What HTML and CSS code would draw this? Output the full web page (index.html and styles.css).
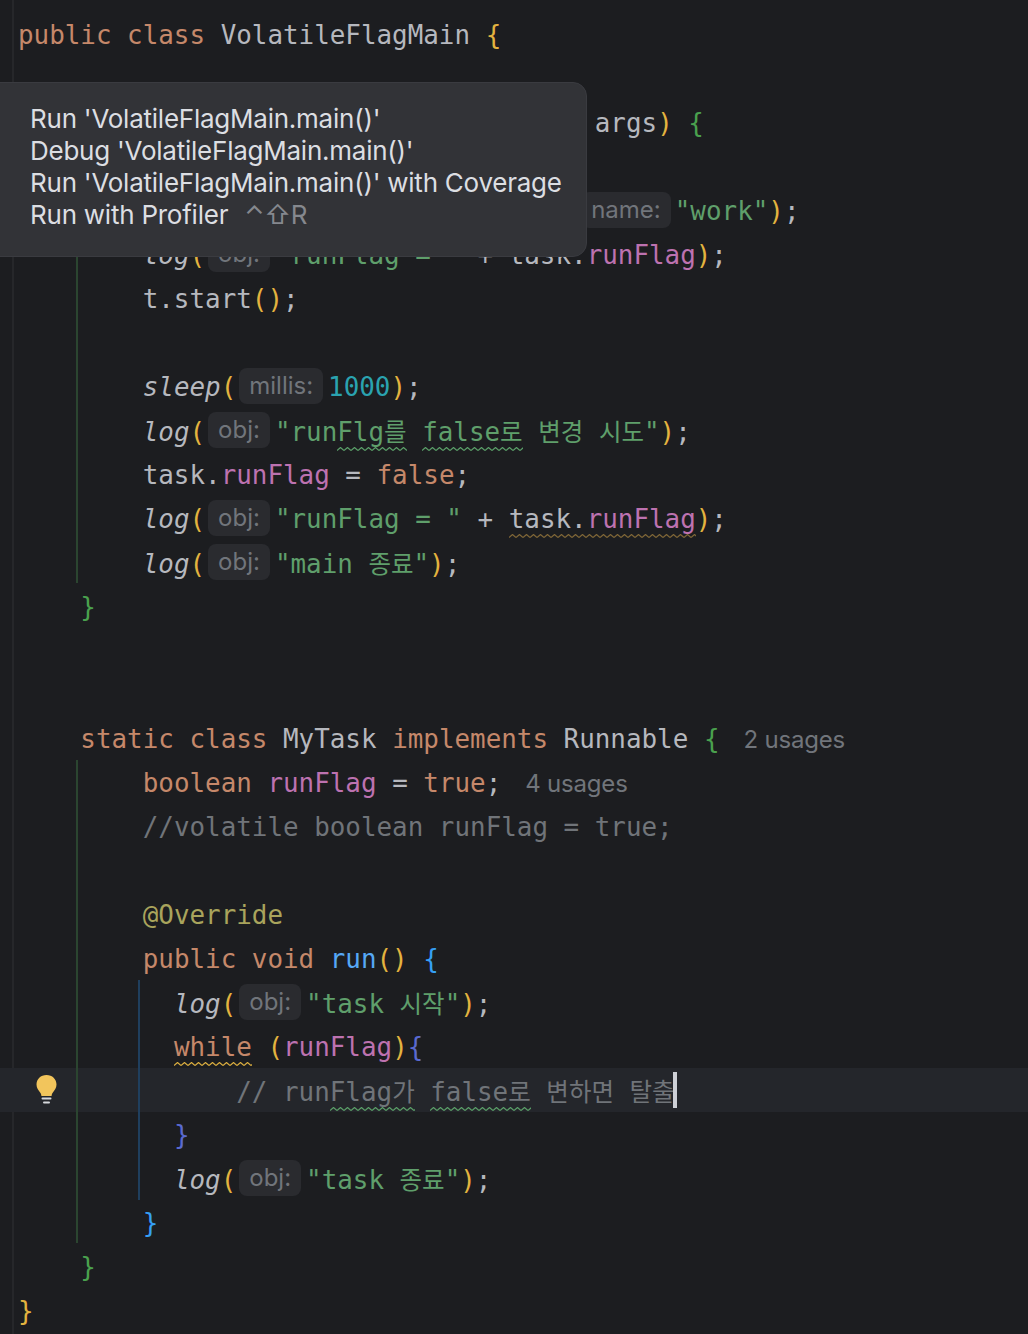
FILE: index.html
```html
<!DOCTYPE html>
<html lang="en">
<head>
<meta charset="utf-8">
<title>VolatileFlagMain</title>
<link rel="stylesheet" href="styles.css">
</head>
<body>
<main class="editor">
<div class="guide guide-green g-main"></div>
<div class="guide guide-green g-task"></div>
<div class="guide guide-blue g-run"></div>
<div class="rule"></div>
<svg class="bulb" viewBox="0 0 21 29" aria-hidden="true"><path d="M10.5 0C4.7 0 .5 4.2.5 9.6c0 3.7 2 5.8 3.6 8 .9 1.2 1.2 2.1 1.3 3.4h10.2c.1-1.3.4-2.2 1.3-3.4 1.6-2.2 3.6-4.3 3.6-8C20.500 4.200 16.300 0 10.500 0z" fill="#f2c55c"/><rect x="5.500" y="22.500" width="10" height="2" rx="1" fill="#d5d7dc"/><rect x="7" y="26.500" width="7" height="2" rx="1" fill="#d5d7dc"/></svg>
<div class="line"><span class="kw">public class</span> VolatileFlagMain <span class="by">{</span></div>
<div class="line"></div>
<div class="line">    <span class="kw">public static void</span> <span class="fn">main</span><span class="by">(</span>String[] args<span class="by">)</span> <span class="bg">{</span></div>
<div class="line">        MyTask task = <span class="kw">new</span> MyTask<span class="by">()</span>;</div>
<div class="line">        Thread t = <span class="kw">new</span> Thread<span class="by">(</span>task, <span class="chip chip-name">name:</span><span class="str">"work"</span><span class="by">)</span>;</div>
<div class="line">        <i>log</i><span class="by">(</span><span class="chip">obj:</span><span class="str">"runFlag = "</span> + task.<span class="fld">runFlag</span><span class="by">)</span>;</div>
<div class="line">        t.start<span class="by">()</span>;</div>
<div class="line"></div>
<div class="line">        <i>sleep</i><span class="by">(</span><span class="chip">millis:</span><span class="num">1000</span><span class="by">)</span>;</div>
<div class="line">        <i>log</i><span class="by">(</span><span class="chip">obj:</span><span class="str">"run<span class="typo">Flg<span class="ko">를</span></span> <span class="typo">false<span class="ko">로</span></span> <span class="ko">변경</span> <span class="ko">시도</span>"</span><span class="by">)</span>;</div>
<div class="line">        task.<span class="fld">runFlag</span> = <span class="kw">false</span>;</div>
<div class="line">        <i>log</i><span class="by">(</span><span class="chip">obj:</span><span class="str">"runFlag = "</span> + <span class="warn">task.<span class="fld">runFlag</span></span><span class="by">)</span>;</div>
<div class="line">        <i>log</i><span class="by">(</span><span class="chip">obj:</span><span class="str">"main <span class="ko">종료</span>"</span><span class="by">)</span>;</div>
<div class="line">    <span class="bg">}</span></div>
<div class="line"></div>
<div class="line"></div>
<div class="line">    <span class="kw">static class</span> MyTask <span class="kw">implements</span> Runnable <span class="bg">{</span><span class="usages">2 usages</span></div>
<div class="line">        <span class="kw">boolean</span> <span class="fld">runFlag</span> = <span class="kw">true</span>;<span class="usages">4 usages</span></div>
<div class="line">        <span class="cm">//volatile boolean runFlag = true;</span></div>
<div class="line"></div>
<div class="line">        <span class="ann">@Override</span></div>
<div class="line">        <span class="kw">public void</span> <span class="fn">run</span><span class="by">()</span> <span class="bb">{</span></div>
<div class="line">          <i>log</i><span class="by">(</span><span class="chip">obj:</span><span class="str">"task <span class="ko">시작</span>"</span><span class="by">)</span>;</div>
<div class="line">          <span class="kw warn-y">while</span> <span class="by">(</span><span class="fld">runFlag</span><span class="by">)</span><span class="bi">{</span></div>
<div class="line line-current">              <span class="cm">// run<span class="typo">Flag<span class="ko">가</span></span> <span class="typo">false<span class="ko">로</span></span> <span class="ko">변하면</span> <span class="ko">탈출</span></span><span class="caret"></span></div>
<div class="line">          <span class="bi">}</span></div>
<div class="line">          <i>log</i><span class="by">(</span><span class="chip">obj:</span><span class="str">"task <span class="ko">종료</span>"</span><span class="by">)</span>;</div>
<div class="line">        <span class="bb">}</span></div>
<div class="line">    <span class="bg">}</span></div>
<div class="line"><span class="by">}</span></div>
<div class="popup">
<div>Run 'VolatileFlagMain.main()'</div>
<div>Debug 'VolatileFlagMain.main()'</div>
<div>Run 'VolatileFlagMain.main()' with Coverage</div>
<div>Run with Profiler<span class="shortcut">⌃⇧R</span></div>
</div>
</main>
</body>
</html>
```
FILE: styles.css
```css
html, body {
  margin: 0;
  padding: 0;
  height: 100%;
  background: #1c1d20;
  overflow: hidden;
}
.editor {
  position: relative;
  height: 1334px;
  padding-top: 12px;
  box-sizing: border-box;
  overflow: hidden;
  font-family: "DejaVu Sans Mono", "Noto Sans CJK KR", monospace;
  font-size: 25.9px;
  color: #b6b8be;
}
.line {
  position: relative;
  height: 44px;
  line-height: 46px;
  padding-left: 18px;
  white-space: pre;
}
.line-current {
  background: #24262b;
}
.kw { color: #c5886a; }
.fn { color: #56a8f5; }
.fld { color: #bd72b0; }
.str { color: #5f9f6b; }
.num { color: #2aa3b0; }
.cm { color: #707479; }
.ann { color: #a9a45c; }
.by { color: #e3b33f; }
.bg { color: #4aa14e; }
.bb { color: #359ff4; }
.bi { color: #5a6ad0; }
i { font-style: italic; }
.ko {
  font-family: "Noto Sans CJK KR", sans-serif;
  font-size: 24.5px;
}
.typo, .warn, .warn-y {
  padding-bottom: 4px;
  background-repeat: repeat-x;
  background-position: 0 100%;
  background-size: 7px 4px;
}
.typo {
  background-image: url("data:image/svg+xml,%3Csvg xmlns='http://www.w3.org/2000/svg' width='7' height='4'%3E%3Cpath d='M0 3.500 3.500 .5 7 3.500' fill='none' stroke='%235a9f68' stroke-width='1.200'/%3E%3C/svg%3E");
}
.warn {
  background-image: url("data:image/svg+xml,%3Csvg xmlns='http://www.w3.org/2000/svg' width='7' height='4'%3E%3Cpath d='M0 3.500 3.500 .5 7 3.500' fill='none' stroke='%23806636' stroke-width='1.200'/%3E%3C/svg%3E");
}
.warn-y {
  background-image: url("data:image/svg+xml,%3Csvg xmlns='http://www.w3.org/2000/svg' width='7' height='4'%3E%3Cpath d='M0 3.500 3.500 .5 7 3.500' fill='none' stroke='%23dcae3e' stroke-width='1.200'/%3E%3C/svg%3E");
}
.chip {
  display: inline-block;
  vertical-align: top;
  height: 36px;
  margin: 4px 5px 0 3px;
  padding: 0 10px;
  border-radius: 8px;
  background: #2a2b2f;
  color: #71757b;
  font-family: Inter, "Liberation Sans", sans-serif;
  font-size: 24px;
  line-height: 35px;
}
.chip-name {
  margin-left: 2px;
  margin-right: 4px;
}
.usages {
  margin-left: 24px;
  color: #71757b;
  font-family: Inter, "Liberation Sans", sans-serif;
  font-size: 24px;
  letter-spacing: -0.2px;
}
.caret {
  position: absolute;
  top: 4px;
  margin-left: -2px;
  width: 4px;
  height: 36px;
  background: #ced0d6;
}
.rule {
  position: absolute;
  left: 12px;
  top: 0;
  bottom: 0;
  width: 2px;
  background: #26272a;
}
.guide {
  position: absolute;
  width: 2px;
  z-index: 1;
}
.guide-green { background: #2b4530; left: 76px; }
.guide-blue { background: #1f3f5e; left: 138px; }
.g-main { top: 145px; height: 438px; }
.g-task { top: 760px; height: 483px; }
.g-run { top: 980px; height: 220px; }
.bulb {
  position: absolute;
  left: 36px;
  top: 1075px;
  width: 21px;
  height: 29px;
  z-index: 2;
}
.popup {
  position: absolute;
  z-index: 3;
  left: -20px;
  top: 82px;
  width: 607px;
  height: 175px;
  box-sizing: border-box;
  padding: 20px 0 0 49px;
  border: 1px solid #3a3b40;
  border-radius: 14px;
  background: #323337;
  color: #dcdee2;
  font-family: Inter, "Liberation Sans", sans-serif;
  font-size: 26px;
  line-height: 32px;
  letter-spacing: -0.24px;
}
.shortcut {
  margin-left: 16px;
  color: #85888e;
}
```
